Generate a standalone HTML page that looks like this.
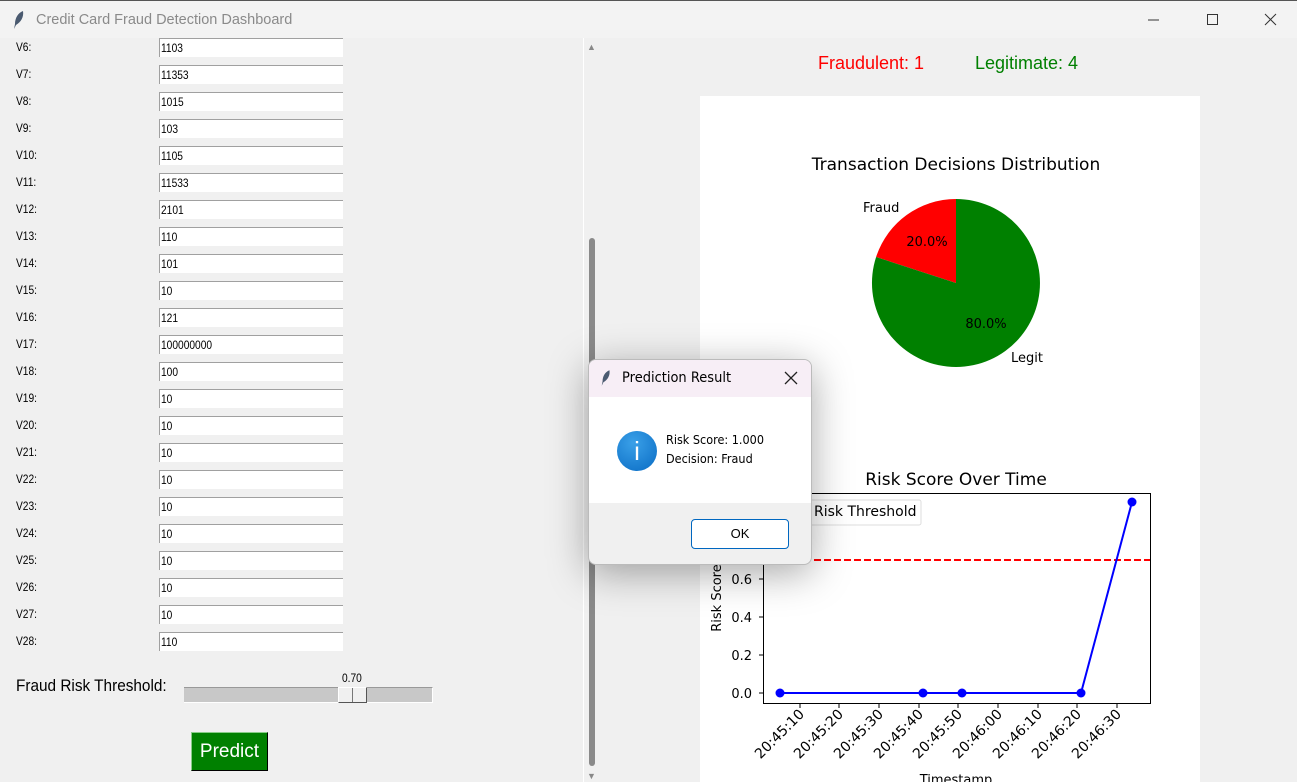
<!DOCTYPE html>
<html><head><meta charset="utf-8"><style>
*{margin:0;padding:0;box-sizing:border-box}
body{width:1297px;height:782px;overflow:hidden;background:#f0f0f0;font-family:"Liberation Sans",sans-serif;position:relative}
.tb{position:absolute;left:0;top:0;width:1297px;height:38px;background:#f3f3f3;border-top:1px solid #555}
.tb .t{position:absolute;left:36px;top:11px;font-size:14.5px;color:#8a8a8a}
.lab{position:absolute;left:16px;font-size:12px;color:#000;transform:scaleX(.85);transform-origin:left}
.ent{position:absolute;left:159px;width:184px;height:19px;background:#fff;border-top:1px solid #a0a0a0;border-left:1px solid #a0a0a0;font-size:12px;padding:2px 0 0 1px;color:#000}
.ent span{display:inline-block;transform:scaleX(.85);transform-origin:left}
</style></head><body>
<div class="tb">
<svg style="position:absolute;left:12px;top:9px" width="14" height="20" viewBox="0 0 14 20"><path d="M11 1C6 3 3 8 3 14L2 19L4 15C9 12 12 7 11 1Z" fill="#4a5a70"/></svg>
<div class="t">Credit Card Fraud Detection Dashboard</div>
<svg style="position:absolute;left:1140px;top:10px" width="150" height="18"><line x1="8" y1="9" x2="19" y2="9" stroke="#333"/><rect x="67.5" y="3.5" width="10" height="10" fill="none" stroke="#333"/><path d="M125 3L136 14M136 3L125 14" stroke="#333"/></svg>
</div>
<div id="rows"></div>
<div style="position:absolute;left:16px;top:677px;font-size:16.5px;transform:scaleX(.93);transform-origin:left">Fraud Risk Threshold:</div>
<div style="position:absolute;left:342px;top:671px;font-size:12px;transform:scaleX(.85);transform-origin:left">0.70</div>
<div style="position:absolute;left:184px;top:687px;width:249px;height:16px;background:#c8c8c8;border-top:1px solid #999;border-right:1px solid #fff;border-bottom:1px solid #fff"></div>
<div style="position:absolute;left:338px;top:687px;width:29px;height:16px;background:#f0f0f0;border:1px solid #fff;border-right-color:#555;border-bottom-color:#555"><div style="position:absolute;left:13px;top:0;width:1px;height:14px;background:#777"></div></div>
<div style="position:absolute;left:191px;top:732px;width:77px;height:39px;background:#008000;border:1px solid #000;border-top-color:#8c8;border-left-color:#8c8;color:#fff;font-size:19px;text-align:center;line-height:37px">Predict</div>
<div style="position:absolute;left:583px;top:38px;width:1px;height:744px;background:#fff"></div>
<div style="position:absolute;left:589px;top:238px;width:6px;height:528px;background:#8a8a8a;border-radius:3px"></div>
<div style="position:absolute;left:587px;top:42px;font-size:9px;color:#888">▲</div>
<div style="position:absolute;left:587px;top:771px;font-size:9px;color:#888">▼</div>
<div style="position:absolute;left:818px;top:53px;font-size:18px;color:#f00">Fraudulent: 1</div>
<div style="position:absolute;left:975px;top:53px;font-size:18px;color:#008000">Legitimate: 4</div>
<svg style="position:absolute;left:700px;top:96px" width="500" height="686" viewBox="700 96 500 686" font-family="DejaVu Sans,sans-serif">
<rect x="700" y="96" width="500" height="686" fill="#fff"/>
<text x="956" y="170" font-size="17" text-anchor="middle">Transaction Decisions Distribution</text>
<path d="M956,283 L956,199 A84,84 0 0,0 876.1,257 Z" fill="#f00"/>
<path d="M956,283 L876.1,257 A84,84 0 1,0 956,199 Z" fill="#008000"/>
<text x="863" y="212" font-size="13">Fraud</text>
<text x="1011" y="362" font-size="13">Legit</text>
<text x="927" y="246" font-size="13" text-anchor="middle">20.0%</text>
<text x="986" y="328" font-size="13" text-anchor="middle">80.0%</text>
<text x="956" y="485" font-size="17" text-anchor="middle">Risk Score Over Time</text>
<rect x="763.5" y="493.5" width="387" height="210" fill="none" stroke="#000"/>
<g font-size="13" text-anchor="end">
<text x="752" y="698">0.0</text><text x="752" y="660">0.2</text><text x="752" y="622">0.4</text><text x="752" y="584">0.6</text>
</g>
<path d="M763 693h-4M763 655h-4M763 617h-4M763 579h-4" stroke="#000"/>
<text transform="translate(721,598) rotate(-90)" font-size="13" text-anchor="middle">Risk Score</text>
<line x1="764" y1="560" x2="1150" y2="560" stroke="#f00" stroke-width="2" stroke-dasharray="7,3"/>
<rect x="808" y="500" width="113" height="25" fill="#fff" stroke="#ddd" rx="2"/>
<text x="814" y="516" font-size="14">Risk Threshold</text>
<polyline points="780,693 923,693 962,693 1081,693 1132,502" fill="none" stroke="#00f" stroke-width="2"/>
<g fill="#00f"><circle cx="780" cy="693" r="4.5"/><circle cx="923" cy="693" r="4.5"/><circle cx="962" cy="693" r="4.5"/><circle cx="1081" cy="693" r="4.5"/><circle cx="1132" cy="502" r="4.5"/></g>
<g font-size="14" text-anchor="end" id="xt"></g>
<text x="956" y="784" font-size="13" text-anchor="middle">Timestamp</text>
</svg>
<div style="position:absolute;left:588px;top:359px;width:224px;height:206px;border-radius:8px;background:#f0f0f0;box-shadow:0 8px 40px rgba(0,0,0,.35);overflow:hidden;border:1px solid #bbb">
<div style="height:37px;background:#f7eef6;position:relative">
<svg style="position:absolute;left:11px;top:8px" width="12" height="20" viewBox="0 0 14 20"><path d="M11 1C6 3 3 8 3 14L2 19L4 15C9 12 12 7 11 1Z" fill="#4a5a70"/></svg>
<div style="position:absolute;left:33px;top:10px;font-size:14px;font-family:'DejaVu Sans',sans-serif;transform:scaleX(.93);transform-origin:left">Prediction Result</div>
<svg style="position:absolute;left:195px;top:11px" width="14" height="14"><path d="M1 1L13 13M13 1L1 13" stroke="#222" stroke-width="1.3"/></svg>
</div>
<div style="height:106px;background:#fff;position:relative">
<div style="position:absolute;left:28px;top:34px;width:40px;height:40px;border-radius:50%;background:radial-gradient(circle at 40% 30%,#3aa0e8,#0a6cc4);color:#fff;text-align:center;font-size:26px;line-height:40px">i</div>
<div style="position:absolute;left:77px;top:33px;font-size:12.5px;line-height:19px;font-family:'DejaVu Sans',sans-serif;transform:scaleX(.9);transform-origin:left">Risk Score: 1.000<br>Decision: Fraud</div>
</div>
<div style="position:absolute;left:102px;top:159px;width:98px;height:30px;background:#fff;border:1px solid #0067c0;border-radius:4px;text-align:center;line-height:28px;font-size:13px">OK</div>
</div>
<script>
var v=[["V6","1103"],["V7","11353"],["V8","1015"],["V9","103"],["V10","1105"],["V11","11533"],["V12","2101"],["V13","110"],["V14","101"],["V15","10"],["V16","121"],["V17","100000000"],["V18","100"],["V19","10"],["V20","10"],["V21","10"],["V22","10"],["V23","10"],["V24","10"],["V25","10"],["V26","10"],["V27","10"],["V28","110"]];
var h="";v.forEach(function(r,i){var y=38+i*27;h+='<div class="lab" style="top:'+(y+2)+'px">'+r[0]+':</div><div class="ent" style="top:'+y+'px"><span>'+r[1]+'</span></div>';});
document.getElementById("rows").innerHTML=h;
var xs=[800,839,879,919,958,998,1038,1077,1117],l=["20:45:10","20:45:20","20:45:30","20:45:40","20:45:50","20:46:00","20:46:10","20:46:20","20:46:30"],s="";
xs.forEach(function(x,i){s+='<line x1="'+x+'" y1="704" x2="'+x+'" y2="708" stroke="#000"/><text transform="translate('+(x+5)+',715) rotate(-45)">'+l[i]+'</text>';});
document.getElementById("xt").innerHTML=s;
</script>
</body></html>
